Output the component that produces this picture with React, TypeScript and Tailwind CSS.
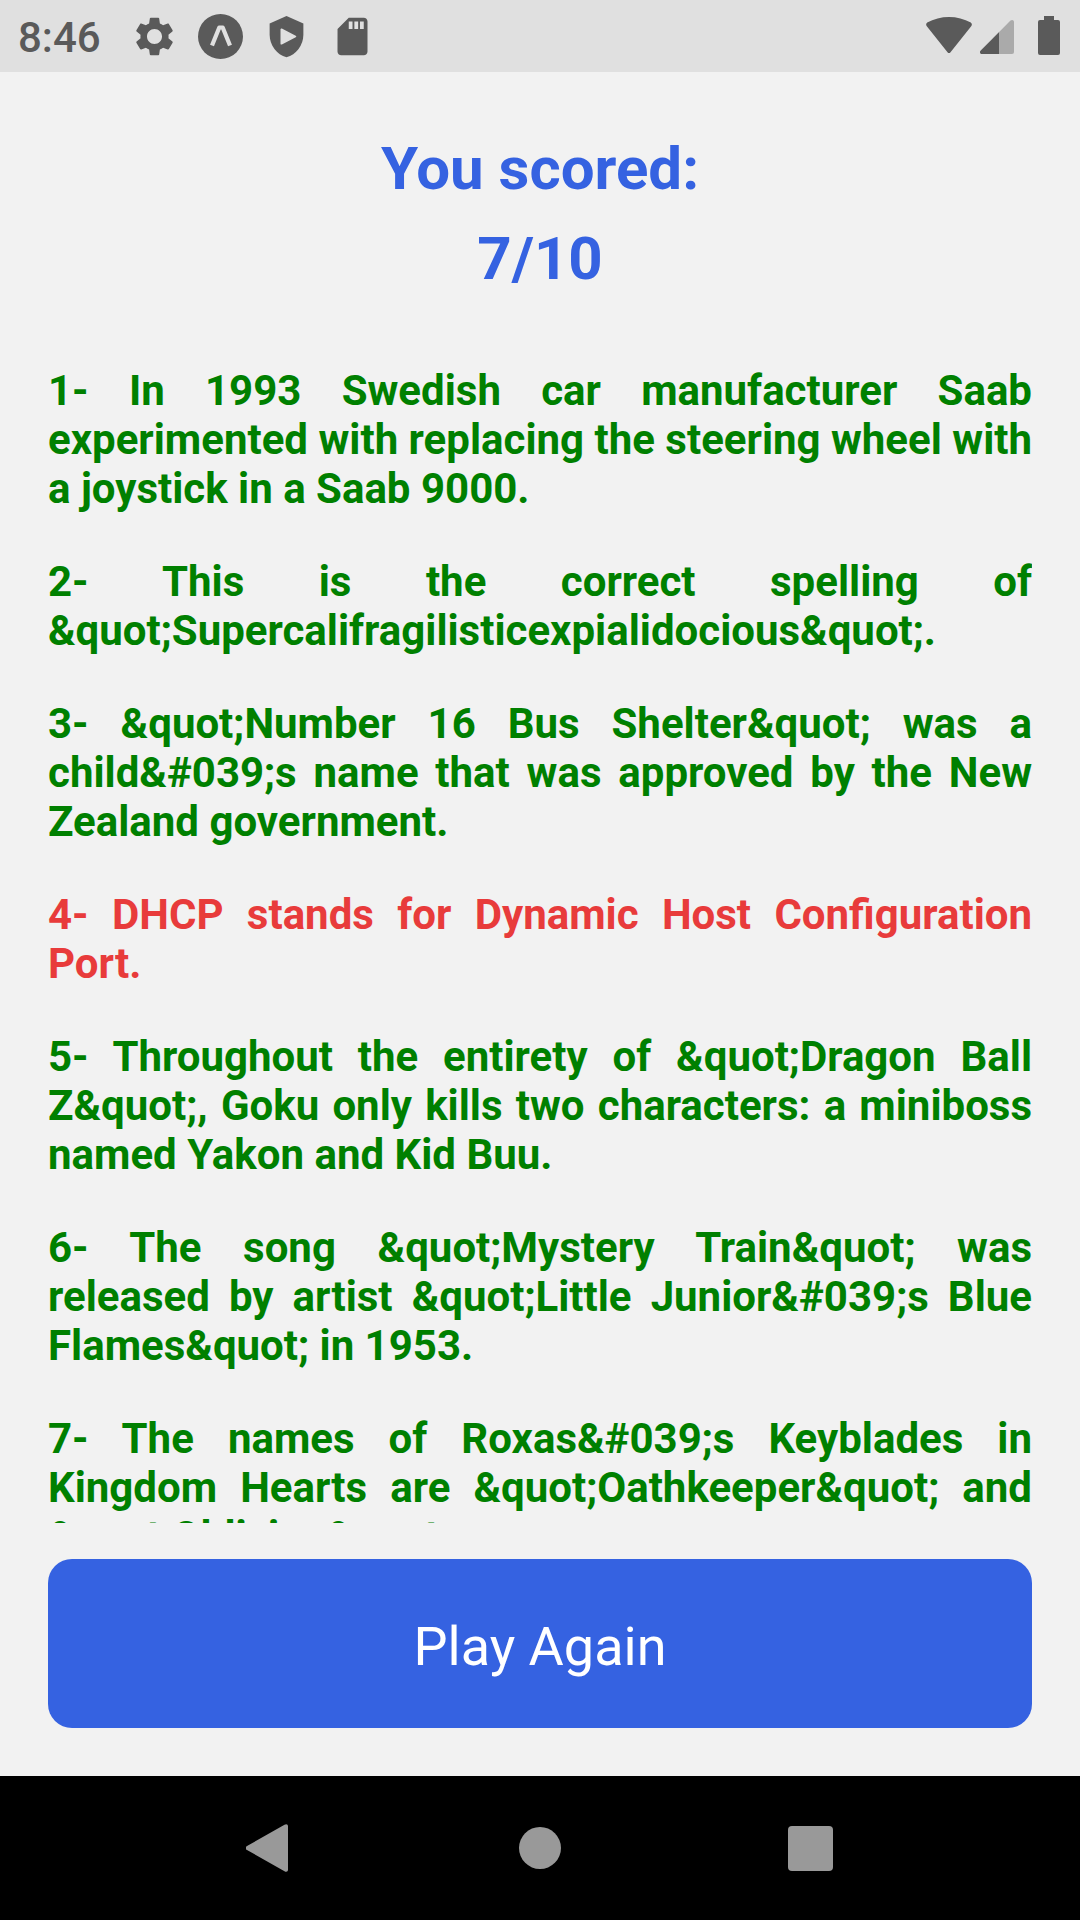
type Answer = { text: string; correct: boolean };

const answers: Answer[] = [
  { text: "In 1993 Swedish car manufacturer Saab experimented with replacing the steering wheel with a joystick in a Saab 9000.", correct: true },
  { text: "This is the correct spelling of &quot;Supercalifragilisticexpialidocious&quot;.", correct: true },
  { text: "&quot;Number 16 Bus Shelter&quot; was a child&#039;s name that was approved by the New Zealand government.", correct: true },
  { text: "DHCP stands for Dynamic Host Configuration Port.", correct: false },
  { text: "Throughout the entirety of &quot;Dragon Ball Z&quot;, Goku only kills two characters: a miniboss named Yakon and Kid Buu.", correct: true },
  { text: "The song &quot;Mystery Train&quot; was released by artist &quot;Little Junior&#039;s Blue Flames&quot; in 1953.", correct: true },
  { text: "The names of Roxas&#039;s Keyblades in Kingdom Hearts are &quot;Oathkeeper&quot; and &quot;Oblivion&quot;.", correct: true },
];

function StatusBar() {
  return (
    <header className="flex h-[72px] shrink-0 items-center justify-between bg-[#e0e0e0] pr-5 pl-[18px] text-[#5a5a5a]">
      <div className="flex items-center gap-[21px]">
        <span className="mr-2.5 pt-0.5 text-[42px] leading-[49px] font-medium">8:46</span>
        <svg className="size-[45px]" viewBox="0 0 24 24" fill="currentColor" aria-hidden="true">
          <path d="M19.43 12.98c.04-.32.07-.64.07-.98s-.03-.66-.07-.98l2.11-1.65c.19-.15.24-.42.12-.64l-2-3.46c-.12-.22-.39-.3-.61-.22l-2.49 1c-.52-.4-1.08-.73-1.69-.98l-.38-2.65C14.46 2.18 14.25 2 14 2h-4c-.25 0-.46.18-.49.42l-.38 2.65c-.61.25-1.17.59-1.69.98l-2.49-1c-.23-.09-.49 0-.61.22l-2 3.46c-.13.22-.07.49.12.64l2.11 1.65c-.04.32-.07.65-.07.98s.03.66.07.98l-2.11 1.65c-.19.15-.24.42-.12.64l2 3.46c.12.22.39.3.61.22l2.49-1c.52.4 1.08.73 1.69.98l.38 2.65c.03.24.24.42.49.42h4c.25 0 .46-.18.49-.42l.38-2.65c.61-.25 1.17-.59 1.69-.98l2.49 1c.23.09.49 0 .61-.22l2-3.46c.12-.22.07-.49-.12-.64l-2.11-1.65zM12 16c-2.21 0-4-1.79-4-4s1.79-4 4-4 4 1.79 4 4-1.79 4-4 4z" />
        </svg>
        <svg className="size-[45px]" viewBox="0 0 45 45" aria-hidden="true">
          <circle cx="22.5" cy="22.5" r="22.5" fill="currentColor" />
          <path d="M14 31.5L21.3 13.5H24.7L32 31.5" fill="none" stroke="#e0e0e0" strokeWidth="4.2" strokeLinejoin="round" />
        </svg>
        <svg className="size-[45px]" viewBox="0 0 24 24" aria-hidden="true">
          <path d="M12 1L3 5v6c0 5.55 3.84 10.74 9 12 5.16-1.26 9-6.45 9-12V5z" fill="currentColor" />
          <path d="M9.3 8.2v7.6l7.4-3.8z" fill="#e0e0e0" stroke="#e0e0e0" strokeWidth="1" strokeLinejoin="round" />
        </svg>
        <svg className="size-[45px]" viewBox="0 0 24 24" fill="currentColor" aria-hidden="true">
          <path d="M18 2h-8L4.02 8 4 20c0 1.1.9 2 2 2h12c1.1 0 2-.9 2-2V4c0-1.1-.9-2-2-2zm-6 6h-2V4h2v4zm3 0h-2V4h2v4zm3 0h-2V4h2v4z" />
        </svg>
      </div>
      <div className="flex items-center">
        <svg className="h-10 w-[46px]" viewBox="0 0 46 40" fill="currentColor" aria-hidden="true">
          <path d="M1 10.5C-.2 9-.2 7.7 1.2 6.5 14-1 32-1 44.8 6.5 46.2 7.7 46.2 9 45 10.5L24.5 36.2C23.5 37.4 22.5 37.4 21.5 36.2Z" />
        </svg>
        <svg className="ml-2 h-10 w-[34px]" viewBox="0 0 34 40" fill="currentColor" aria-hidden="true">
          <path d="M30.5 4.6C32 3.2 34 4 34 6V36Q34 38 32 38H2C0 38-.6 36 .6 34.7Z" fill="#aaaaaa" />
          <path d="M19 16.2V38H2C0 38-.6 36 .6 34.7Z" />
        </svg>
        <svg className="ml-6 h-10 w-[22px]" viewBox="0 0 22 40" fill="currentColor" aria-hidden="true">
          <path d="M6 0H16V4H20Q22 4 22 6V37Q22 39 20 39H2Q0 39 0 37V6Q0 4 2 4H6Z" />
        </svg>
      </div>
    </header>
  );
}

function NavigationBar() {
  return (
    <nav className="grid h-36 shrink-0 grid-cols-3 bg-black px-[12.5%] text-[#999999]">
      <button type="button" aria-label="Back" className="flex items-center justify-center">
        <svg className="h-12 w-12" viewBox="0 0 48 48" fill="currentColor" aria-hidden="true">
          <path d="M1 22L38.5 .8C40.5-.4 42 .5 42 2.5V45.5C42 47.5 40.5 48.4 38.5 47.2L1 26C-.9 24.9-.9 23.1 1 22Z" />
        </svg>
      </button>
      <button type="button" aria-label="Home" className="flex items-center justify-center">
        <span className="size-[42px] rounded-full bg-current" />
      </button>
      <button type="button" aria-label="Recent apps" className="flex items-center justify-center">
        <span className="size-[45px] rounded bg-current" />
      </button>
    </nav>
  );
}

export default function App() {
  return (
    <div className="flex h-screen flex-col bg-[#f2f2f2] font-['Roboto',sans-serif]">
      <StatusBar />
      <main className="flex min-h-0 flex-1 flex-col px-12 pt-13 pb-12">
        <h1 className="text-center text-[60px] leading-[90px] font-bold text-[#3562e1]">
          You scored:
          <br />
          7/10
        </h1>
        <ol className="mt-[62px] flex min-h-0 flex-1 flex-col gap-11 overflow-y-auto [scrollbar-width:none]">
          {answers.map((answer, index) => (
            <li
              key={index}
              className={`shrink-0 text-justify text-[42px] leading-[49px] font-bold ${answer.correct ? "text-[#008000]" : "text-[#e83b3b]"}`}
            >
              {`${index + 1}- ${answer.text}`}
            </li>
          ))}
        </ol>
        <button
          type="button"
          className="mt-9 w-full shrink-0 rounded-3xl bg-[#3562e1] pt-14 pb-[50px] text-[54px] leading-[63px] text-white"
        >
          Play Again
        </button>
      </main>
      <NavigationBar />
    </div>
  );
}
